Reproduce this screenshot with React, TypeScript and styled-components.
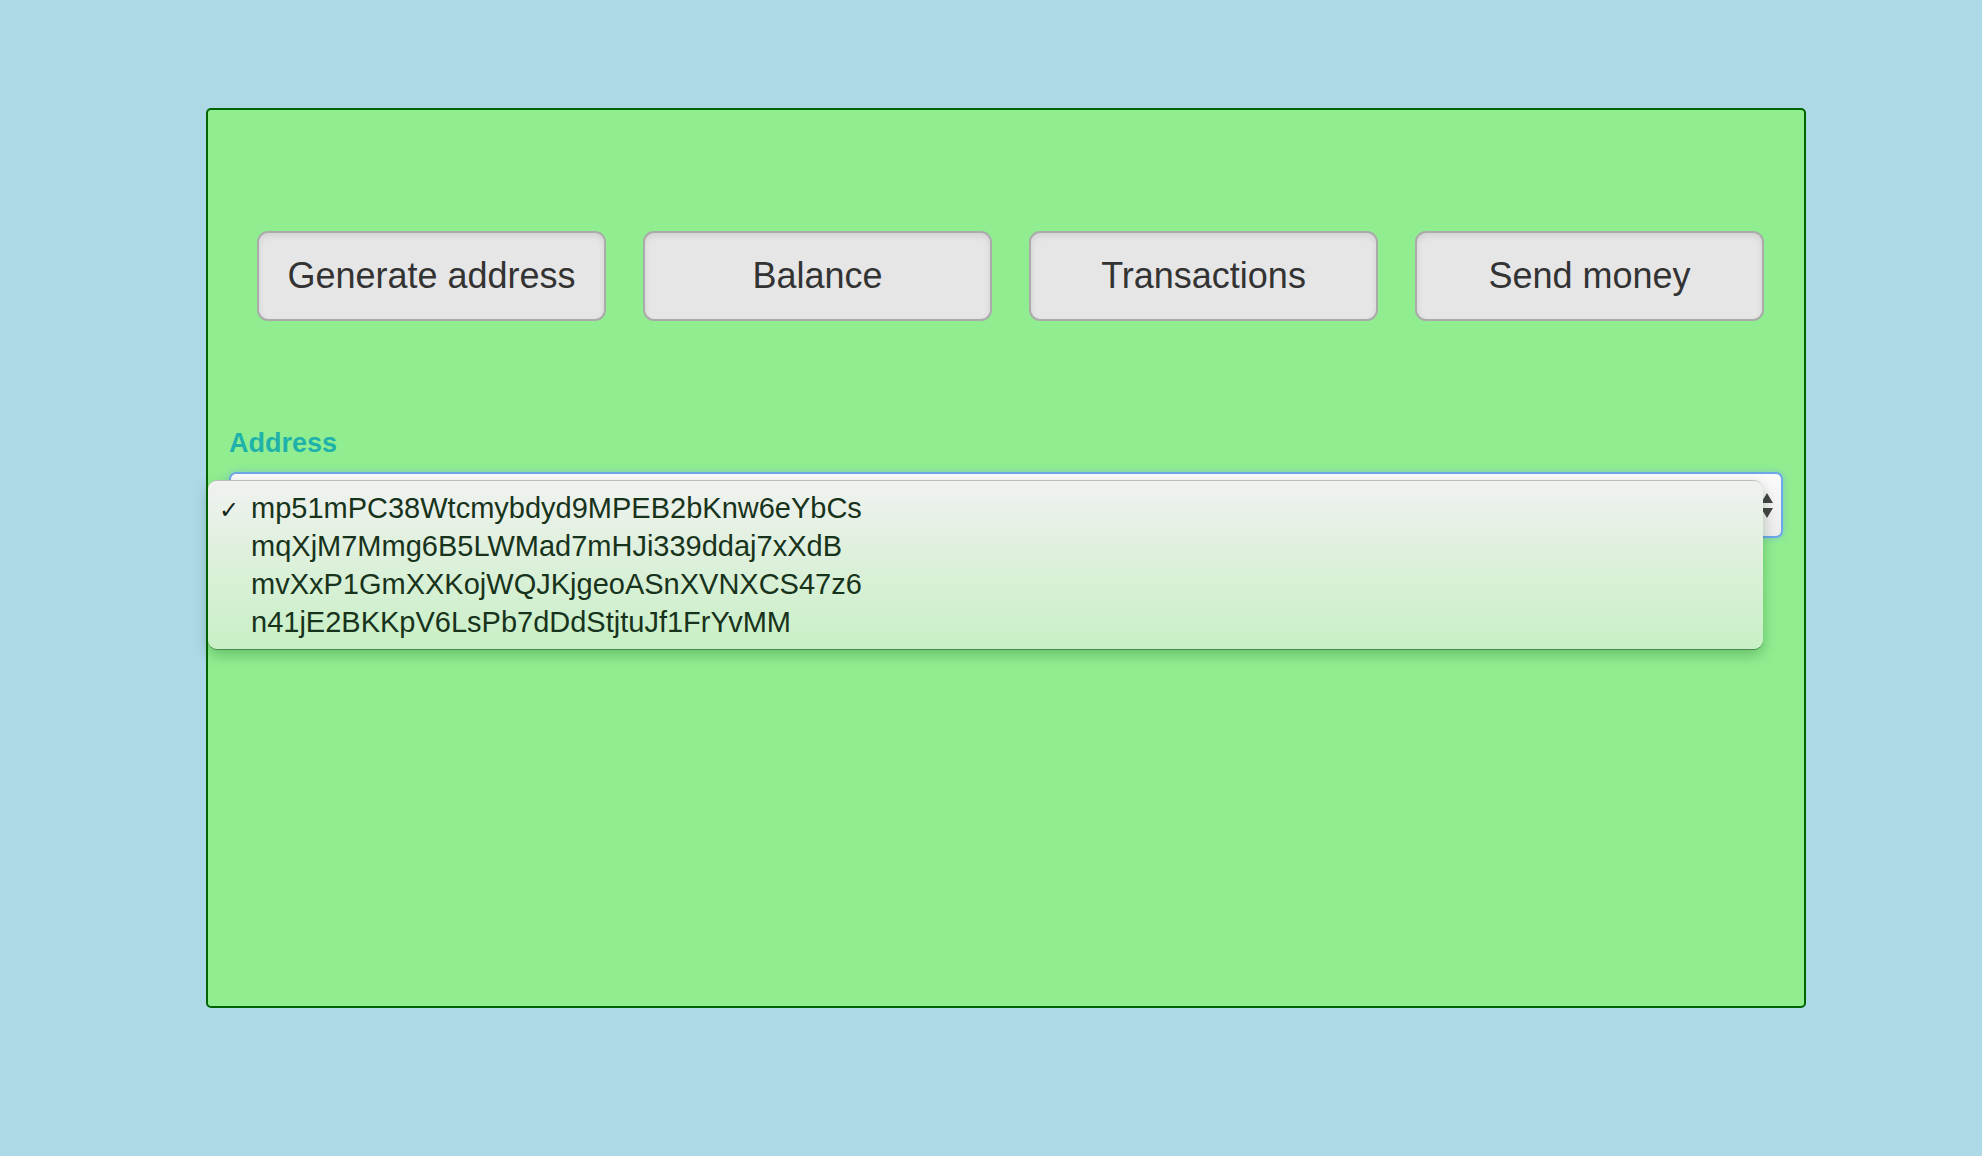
import React from "react";
import styled, { createGlobalStyle } from "styled-components";

const GlobalStyle = createGlobalStyle`
  html, body {
    margin: 0;
    padding: 0;
    background: #add8e6;
    font-family: "Liberation Sans", Arial, sans-serif;
  }
`;

const Page = styled.div`
  min-height: 1156px;
  padding: 108px 0 0 206px;
  box-sizing: border-box;
`;

const Panel = styled.div`
  width: 1600px;
  height: 900px;
  box-sizing: border-box;
  border: 2px solid #006400;
  border-radius: 5px;
  background: #90ee90;
  padding-top: 121px;
`;

const ButtonRow = styled.div`
  display: flex;
  gap: 37px;
  padding-left: 49px;
`;

const ActionButton = styled.button`
  width: 349px;
  height: 90px;
  box-sizing: border-box;
  font-family: "Liberation Sans", Arial, sans-serif;
  font-size: 36px;
  color: #333;
  background: #e6e6e6;
  border: 2px solid #ababab;
  border-radius: 11px;
  box-shadow: inset 0 3px 6px rgba(0, 0, 0, 0.09);
  padding: 0;
  cursor: pointer;
`;

const Field = styled.div`
  margin-top: 106px;
  padding: 0 21px;
`;

const Label = styled.label`
  display: block;
  font-size: 27px;
  line-height: 32px;
  font-weight: bold;
  color: #20b2aa;
  margin-bottom: 13px;
`;

const SelectBox = styled.div`
  position: relative;
  height: 66px;
  box-sizing: border-box;
  border: 2px solid #6ea6ea;
  border-radius: 7px;
  background: linear-gradient(180deg, #fbfbfb 0%, #ececec 100%);
  box-shadow: 0 0 5px 2px rgba(120, 170, 235, 0.35);
`;

const Arrows = styled.svg`
  position: absolute;
  right: 8px;
  top: 19px;
`;

const Popup = styled.div`
  position: absolute;
  left: -23px;
  right: 18px;
  top: 6px;
  padding: 8px 0;
  border-radius: 9px;
  border-top: 1px solid #bdbdbd;
  background: linear-gradient(180deg, #f0f2f0 0%, #def0dc 45%, #c8f0c6 100%);
  box-shadow: 0 1px 0 rgba(40, 90, 40, 0.55), 0 6px 14px rgba(0, 70, 0, 0.28);
`;

const Option = styled.div`
  display: flex;
  align-items: baseline;
  height: 38px;
  line-height: 38px;
  padding-left: 11px;
  font-size: 29px;
  color: #18331b;
`;

const Check = styled.span`
  width: 32px;
  font-family: "DejaVu Sans", sans-serif;
  font-size: 24px;
  font-weight: bold;
  color: #15261a;
`;

const addresses = [
  "mp51mPC38Wtcmybdyd9MPEB2bKnw6eYbCs",
  "mqXjM7Mmg6B5LWMad7mHJi339ddaj7xXdB",
  "mvXxP1GmXXKojWQJKjgeoASnXVNXCS47z6",
  "n41jE2BKKpV6LsPb7dDdStjtuJf1FrYvMM",
];

export default function App() {
  return (
    <>
      <GlobalStyle />
      <Page>
        <Panel>
          <ButtonRow>
            <ActionButton>Generate address</ActionButton>
            <ActionButton>Balance</ActionButton>
            <ActionButton>Transactions</ActionButton>
            <ActionButton>Send money</ActionButton>
          </ButtonRow>
          <Field>
            <Label>Address</Label>
            <SelectBox>
              <Arrows width="12" height="26" viewBox="0 0 12 26">
                <path d="M6 0 L12 10 L0 10 Z" fill="#444" />
                <path d="M0 15 L12 15 L6 25 Z" fill="#444" />
              </Arrows>
              <Popup>
                {addresses.map((a, i) => (
                  <Option key={a}>
                    <Check>{i === 0 ? "✓" : ""}</Check>
                    {a}
                  </Option>
                ))}
              </Popup>
            </SelectBox>
          </Field>
        </Panel>
      </Page>
    </>
  );
}
